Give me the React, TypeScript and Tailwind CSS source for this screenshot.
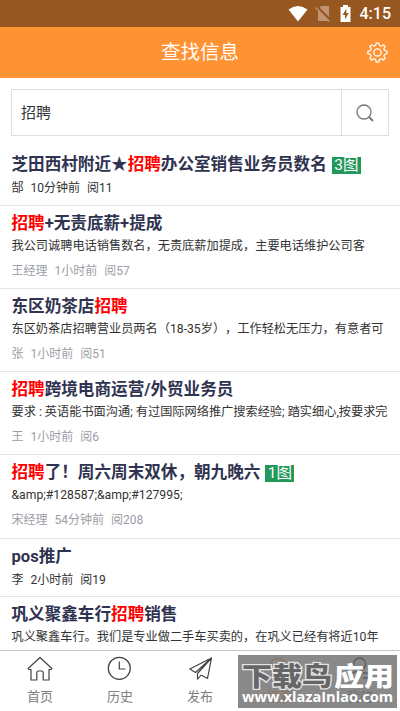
import React from "react";

type Part = { t: string; hot?: boolean };
type Item = { title: Part[]; badge?: string; desc?: string; meta: string[]; h: string };

const items: Item[] = [
  { title: [{ t: "芝田西村附近★" }, { t: "招聘", hot: true }, { t: "办公室销售业务员数名" }], badge: "3图", meta: ["郜", "10分钟前", "阅11"], h: "h-[59px]" },
  { title: [{ t: "招聘", hot: true }, { t: "+无责底薪+提成" }], desc: "我公司诚聘电话销售数名，无责底薪加提成，主要电话维护公司客", meta: ["王经理", "1小时前", "阅57"], h: "h-[83px]" },
  { title: [{ t: "东区奶茶店" }, { t: "招聘", hot: true }], desc: "东区奶茶店招聘营业员两名（18-35岁），工作轻松无压力，有意者可", meta: ["张", "1小时前", "阅51"], h: "h-[83px]" },
  { title: [{ t: "招聘", hot: true }, { t: "跨境电商运营/外贸业务员" }], desc: "要求 : 英语能书面沟通; 有过国际网络推广搜索经验; 踏实细心,按要求完", meta: ["王", "1小时前", "阅6"], h: "h-[83px]" },
  { title: [{ t: "招聘", hot: true }, { t: "了！周六周末双休，朝九晚六" }], badge: "1图", desc: "&amp;#128587;&amp;#127995;", meta: ["宋经理", "54分钟前", "阅208"], h: "h-[84px]" },
  { title: [{ t: "pos推广" }], meta: ["李", "2小时前", "阅19"], h: "h-[58px]" },
  { title: [{ t: "巩义聚鑫车行" }, { t: "招聘", hot: true }, { t: "销售" }], desc: "巩义聚鑫车行。我们是专业做二手车买卖的，在巩义已经有将近10年", meta: [], h: "h-[54px]" },
];

function Row({ item }: { item: Item }) {
  return (
    <li className={`${item.h} shrink-0 border-b border-[#e6e6e8] pl-[11.5px] pt-[6px] whitespace-nowrap [text-spacing-trim:space-all]`}>
      <h2 className="flex h-6 items-center text-[16.6px] font-bold text-[#2f3350]">
        {item.title.map((p) => (
          <span key={p.t} className={p.hot ? "text-[#ff0000]" : ""}>{p.t}</span>
        ))}
        {item.badge && (
          <span className="ml-[5px] mt-px flex h-[17px] w-[29px] items-center justify-center bg-[#23985a] text-[15.5px] leading-[16px] font-normal text-white"><span className="-mt-px">{item.badge}</span></span>
        )}
      </h2>
      {item.desc && <p className="h-[24px] text-[12.2px] leading-[20px] text-[#333]">{item.desc}</p>}
      {item.meta.length > 0 && (
        <div className={`flex gap-[7px] text-[12px] leading-[22px] ${item.desc ? "text-[#9c9da6]" : "text-[#333]"}`}>
          {item.meta.map((m) => <span key={m}>{m}</span>)}
        </div>
      )}
    </li>
  );
}

// Eight rounded teeth joined by scalloped valleys.
const gear = Array.from({ length: 8 }, (_, i) => {
  const at = (r: number, d: number) => {
    const a = ((i * 45 + d - 90) * Math.PI) / 180;
    return `${(10.5 + r * Math.cos(a)).toFixed(2)} ${(10.5 + r * Math.sin(a)).toFixed(2)}`;
  };
  return `${i ? "L" : "M"}${at(9.5, -8)} Q${at(10, 0)} ${at(9.5, 8)} C${at(6.6, 11)} ${at(6.6, 34)} ${at(9.5, 37)}`;
}).join(" ") + "Z";

export default function App() {
  return (
    <div className="relative flex h-[711px] w-[400px] flex-col overflow-hidden bg-white font-['Roboto','Noto_Sans_CJK_SC',sans-serif]">
      <div className="flex h-[27px] shrink-0 items-center justify-end bg-[#965720] pr-[9px] text-white">
        <svg width="20" height="16" viewBox="0 0 20 16" fill="#fff"><path d="M.5 3.6Q10-3.4 19.5 3.6L10 15.5Z" /></svg>
        <svg className="ml-[7px]" width="16" height="17" viewBox="0 0 16 17"><path d="M6 1h8v15H3V4.500Z" fill="#c09470" /><path d="M1 1l14 14" stroke="#965720" strokeWidth="3" /><path d="M.5 2.500l14 14" stroke="#c09470" strokeWidth="1.500" /></svg>
        <svg className="ml-[9px]" width="11" height="17" viewBox="0 0 11 17"><path d="M3 0h5v2h2.500v15H.5V2H3Z" fill="#fff" /><path d="M6.500 3.500L2.500 10H5v4.500L8.700 8H6.200Z" fill="#965720" /></svg>
        <span className="ml-[9px] mt-px text-[16px] font-medium leading-none">4:15</span>
      </div>
      <header className="flex h-[51px] shrink-0 items-center bg-[#ff9233] text-white">
        <span className="w-[45px]" />
        <h1 className="flex-1 text-center text-[19.5px] leading-none">查找信息</h1>
        <svg className="mr-3 ml-[12px]" width="21" height="21" viewBox="0 0 21 21" fill="none" stroke="#fff" strokeWidth="1.300" strokeLinejoin="round"><path d={gear} /><circle cx="10.500" cy="10.500" r="3.700" /></svg>
      </header>
      <div className="mx-[11px] mt-[11px] flex h-[47px] shrink-0 border border-[#dedede]">
        <div className="flex flex-1 items-center pl-[9px] pt-px text-[15px] text-[#333]">招聘</div>
        <div className="flex w-[47px] items-center justify-center border-l border-[#dedede]">
          <svg width="18" height="18" viewBox="0 0 18 18" fill="none" stroke="#777" strokeWidth="1.300"><circle cx="8" cy="8" r="7" /><path d="M13 13l4 4" strokeWidth="1.800" /></svg>
        </div>
      </div>
      <ul className="mt-[11px] flex min-h-0 flex-1 flex-col overflow-hidden">
        {items.map((it, i) => <Row key={i} item={it} />)}
      </ul>
      <nav className="grid h-[61px] shrink-0 grid-cols-5 border-t border-[#c8c8c8] bg-white text-[13px] text-[#808080]">
        <div className="flex flex-col items-center pt-[5px]">
          <svg width="26" height="26" viewBox="0 0 26 26" fill="none" stroke="#444" strokeWidth="1.200" strokeLinejoin="round"><path d="M13 1.500L1.400 12.200Q1 13.500 2.200 13.500H4V24H9.800V16.500Q9.800 15 11.200 15H14.800Q16.200 15 16.200 16.500V24H22V13.500H23.800Q25 13.500 24.600 12.200Z" /></svg>
          <span className="mt-[5px] leading-[20px]">首页</span>
        </div>
        <div className="flex flex-col items-center pt-[5px]">
          <svg width="26" height="26" viewBox="0 0 26 26" fill="none" stroke="#444" strokeWidth="1.200"><circle cx="12.300" cy="12.300" r="11" /><path d="M12.300 5.500v7.500H18.500" /></svg>
          <span className="mt-[5px] leading-[20px]">历史</span>
        </div>
        <div className="flex flex-col items-center pt-[5px]">
          <svg width="26" height="26" viewBox="0 0 26 26" fill="none" stroke="#444" strokeWidth="1.200" strokeLinejoin="round"><path d="M24.500 2L2.800 13L8.500 16.500L24.500 2L20.500 22.500L14 19M10.500 23.500V17.500L24.500 2M10.500 23.500L14 19" /></svg>
          <span className="mt-[5px] leading-[20px]">发布</span>
        </div>
        <div className="flex flex-col items-center pt-[5px] text-[#ff9233]">
          <svg className="-translate-x-px" width="26" height="26" viewBox="0 0 26 26" fill="none" stroke="#ff9233" strokeWidth="1.500"><circle cx="12" cy="11" r="8.500" /><path d="M18 17l5 5" /></svg>
          <span className="mt-[5px] leading-[20px]">搜索</span>
        </div>
        <div className="flex flex-col items-center pt-[5px]">
          <svg width="26" height="26" viewBox="0 0 26 26" fill="none" stroke="#222" strokeWidth="1.300"><circle cx="12.500" cy="8" r="6" /><path d="M2 24Q3 15 12.500 15M16 17h8M16 22h8" /></svg>
          <span className="mt-[5px] leading-[20px]">我的</span>
        </div>
      </nav>
      <div className="absolute left-[238px] top-[655px] h-[53px] w-[159px] bg-[#6c6c6c]/80">
        <svg width="159" height="53" viewBox="0 0 159 53">
          <g fontFamily="'Noto Sans CJK SC',sans-serif" fontWeight="900" fontSize="26">
            <text x="4" y="31" textLength="90" lengthAdjust="spacingAndGlyphs" fill="#666" stroke="#e4e4e4" strokeWidth="2.600" paintOrder="stroke">下载鸟</text>
            <text x="96" y="31" textLength="60" lengthAdjust="spacingAndGlyphs" fill="#fff">应用</text>
          </g>
          <text x="4" y="47" textLength="151" lengthAdjust="spacingAndGlyphs" fontFamily="'Open Sans',sans-serif" fontWeight="700" fontSize="14" fill="#fff">www.xlazaInlao.com</text>
        </svg>
      </div>
    </div>
  );
}
